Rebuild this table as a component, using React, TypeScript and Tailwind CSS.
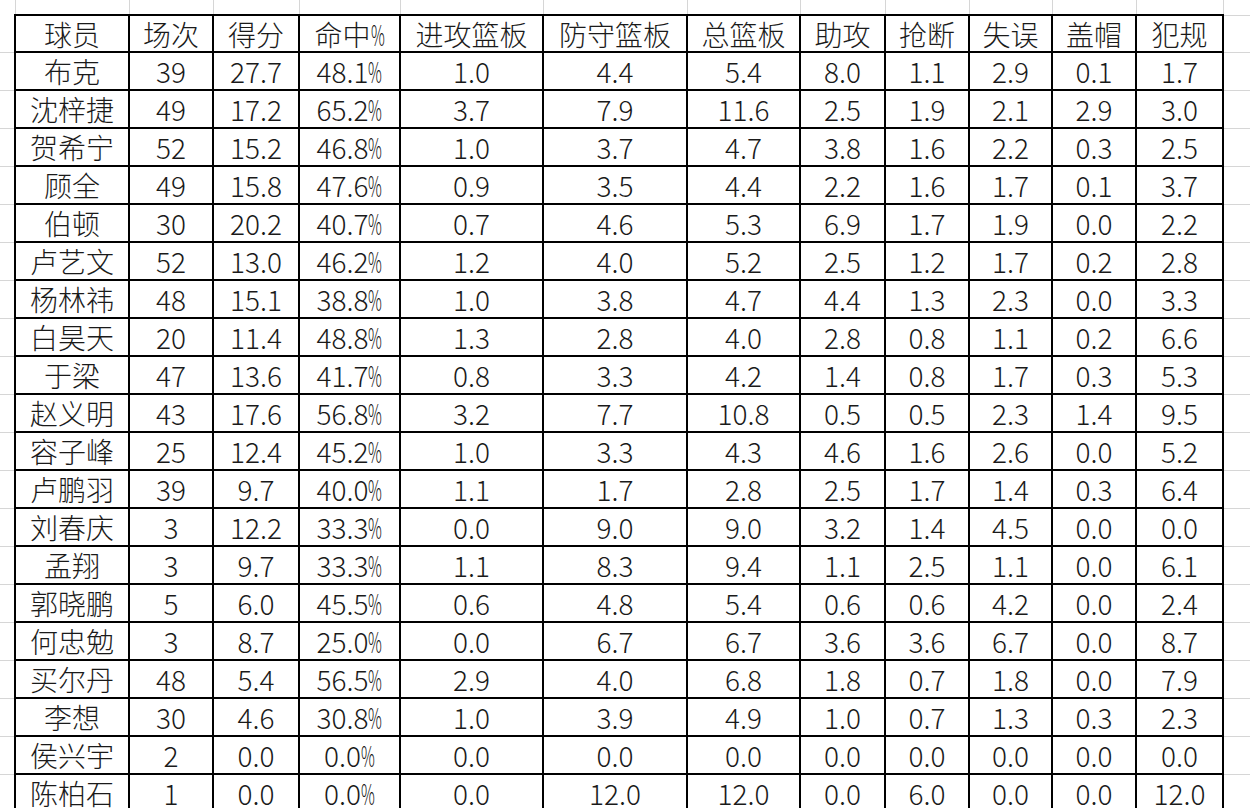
const HEADERS = ["球员", "场次", "得分", "命中%", "进攻篮板", "防守篮板", "总篮板", "助攻", "抢断", "失误", "盖帽", "犯规"];

// column widths in px, measured off the sheet
const WIDTHS = [114, 84, 86, 101, 143, 144, 113, 85, 84, 83, 84, 87];

const ROWS: string[][] = [
  ["布克", "39", "27.7", "48.1%", "1.0", "4.4", "5.4", "8.0", "1.1", "2.9", "0.1", "1.7"],
  ["沈梓捷", "49", "17.2", "65.2%", "3.7", "7.9", "11.6", "2.5", "1.9", "2.1", "2.9", "3.0"],
  ["贺希宁", "52", "15.2", "46.8%", "1.0", "3.7", "4.7", "3.8", "1.6", "2.2", "0.3", "2.5"],
  ["顾全", "49", "15.8", "47.6%", "0.9", "3.5", "4.4", "2.2", "1.6", "1.7", "0.1", "3.7"],
  ["伯顿", "30", "20.2", "40.7%", "0.7", "4.6", "5.3", "6.9", "1.7", "1.9", "0.0", "2.2"],
  ["卢艺文", "52", "13.0", "46.2%", "1.2", "4.0", "5.2", "2.5", "1.2", "1.7", "0.2", "2.8"],
  ["杨林祎", "48", "15.1", "38.8%", "1.0", "3.8", "4.7", "4.4", "1.3", "2.3", "0.0", "3.3"],
  ["白昊天", "20", "11.4", "48.8%", "1.3", "2.8", "4.0", "2.8", "0.8", "1.1", "0.2", "6.6"],
  ["于梁", "47", "13.6", "41.7%", "0.8", "3.3", "4.2", "1.4", "0.8", "1.7", "0.3", "5.3"],
  ["赵义明", "43", "17.6", "56.8%", "3.2", "7.7", "10.8", "0.5", "0.5", "2.3", "1.4", "9.5"],
  ["容子峰", "25", "12.4", "45.2%", "1.0", "3.3", "4.3", "4.6", "1.6", "2.6", "0.0", "5.2"],
  ["卢鹏羽", "39", "9.7", "40.0%", "1.1", "1.7", "2.8", "2.5", "1.7", "1.4", "0.3", "6.4"],
  ["刘春庆", "3", "12.2", "33.3%", "0.0", "9.0", "9.0", "3.2", "1.4", "4.5", "0.0", "0.0"],
  ["孟翔", "3", "9.7", "33.3%", "1.1", "8.3", "9.4", "1.1", "2.5", "1.1", "0.0", "6.1"],
  ["郭晓鹏", "5", "6.0", "45.5%", "0.6", "4.8", "5.4", "0.6", "0.6", "4.2", "0.0", "2.4"],
  ["何忠勉", "3", "8.7", "25.0%", "0.0", "6.7", "6.7", "3.6", "3.6", "6.7", "0.0", "8.7"],
  ["买尔丹", "48", "5.4", "56.5%", "2.9", "4.0", "6.8", "1.8", "0.7", "1.8", "0.0", "7.9"],
  ["李想", "30", "4.6", "30.8%", "1.0", "3.9", "4.9", "1.0", "0.7", "1.3", "0.3", "2.3"],
  ["侯兴宇", "2", "0.0", "0.0%", "0.0", "0.0", "0.0", "0.0", "0.0", "0.0", "0.0", "0.0"],
  ["陈柏石", "1", "0.0", "0.0%", "0.0", "12.0", "12.0", "0.0", "6.0", "0.0", "0.0", "12.0"],
];

const cell = "border-2 border-black p-0 text-center align-middle leading-none whitespace-nowrap";
const edge = "border border-[#d6d6d6] p-0";

// the sheet's % sign is a tall, squeezed glyph
function Value({ v }: { v: string }) {
  if (!v.endsWith("%")) return <>{v}</>;
  return (
    <>
      {v.slice(0, -1)}
      <span className="inline-block w-[14px] origin-left scale-x-[0.55] text-left">%</span>
    </>
  );
}

export default function App() {
  return (
    <div className="h-[808px] w-[1250px] overflow-hidden bg-white">
      <table
        className="w-[1250px] table-fixed border-collapse text-[28px] font-light text-[#1a1a1a]"
        style={{ fontFamily: '"Noto Sans CJK SC", "Noto Sans", sans-serif' }}
      >
        <colgroup>
          <col className="w-[15px]" />
          {WIDTHS.map((w, i) => (
            <col key={i} style={{ width: w }} />
          ))}
          <col />
        </colgroup>
        <tbody>
          {/* sheet rows above the table */}
          <tr className="h-[15px]">
            <td className="border-r border-[#d6d6d6] p-0" />
            {WIDTHS.map((_, i) => (
              <td key={i} className="border-r border-[#d6d6d6] p-0" />
            ))}
            <td className="p-0" />
          </tr>

          {/* Header */}
          <tr className="h-[37px]">
            <td className={edge + " border-l-0 border-t-0"} />
            {HEADERS.map((h) => (
              <td key={h} className={cell}>
                <Value v={h} />
              </td>
            ))}
            <td className={edge + " border-r-0"} />
          </tr>

          {ROWS.map((row) => (
            <tr key={row[0]} className="h-[38px]">
              <td className={edge + " border-l-0"} />
              {row.map((v, i) => (
                <td key={i} className={cell}>
                  <Value v={v} />
                </td>
              ))}
              <td className={edge + " border-r-0"} />
            </tr>
          ))}
        </tbody>
      </table>
    </div>
  );
}
